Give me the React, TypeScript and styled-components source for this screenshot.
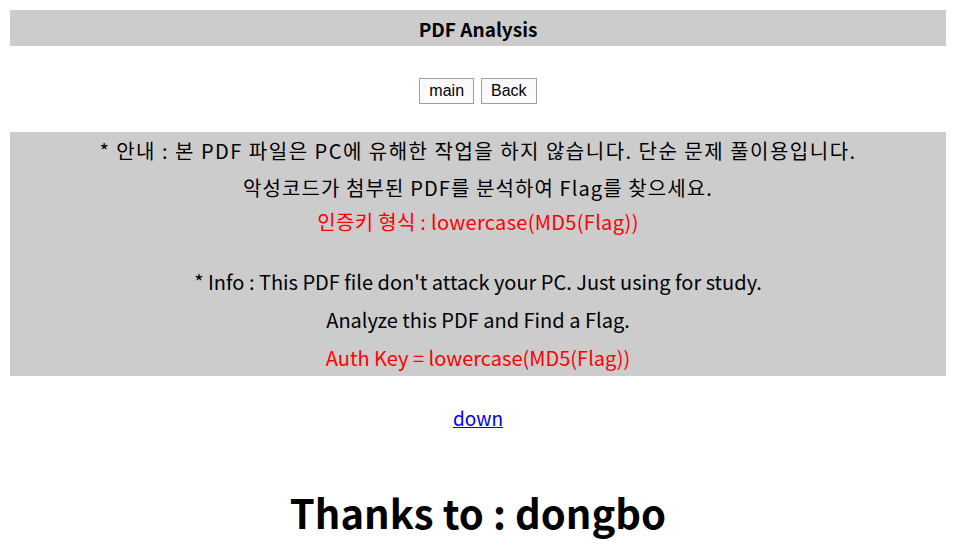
import React from "react";
import styled, { createGlobalStyle } from "styled-components";

const Global = createGlobalStyle`
  html, body { margin: 0; padding: 0; background: #fff; }
  body { padding: 10px 9px 10px 10px; font-family: "Noto Sans CJK KR", "Noto Sans", sans-serif; color: #000; }
`;

const Header = styled.div`
  background: #cccccc;
  height: 36px;
  display: flex;
  align-items: center;
  justify-content: center;
  font-size: 19px;
  font-weight: bold;
`;

const ButtonRow = styled.div`
  display: flex;
  justify-content: center;
  gap: 7px;
  margin-top: 32px;
  margin-bottom: 28px;
`;

const Btn = styled.button`
  font-family: "Liberation Sans", Arial, sans-serif;
  font-size: 16px;
  height: 26px;
  padding: 0 9px;
  background: #fafafa;
  border: 1px solid #a0a0a0;
  border-radius: 0;
  color: #000;
`;

const InfoBox = styled.div`
  background: #cccccc;
  height: 244px;
  display: flex;
  flex-direction: column;
  align-items: center;
  padding-top: 5px;
  box-sizing: border-box;
`;

const Line = styled.div<{ $red?: boolean; $gap?: number; $ls?: number }>`
  font-size: 20px;
  line-height: 28px;
  color: ${(p) => (p.$red ? "#ff0000" : "#000")};
  margin-top: ${(p) => p.$gap ?? 0}px;
  letter-spacing: ${(p) => p.$ls ?? 0}px;
  white-space: nowrap;
`;

const DownWrap = styled.div`
  display: flex;
  justify-content: center;
  margin-top: 28px;
`;

const DownLink = styled.a`
  font-size: 19px;
  color: #0000ee;
  text-decoration: underline;
`;

const Thanks = styled.h1`
  text-align: center;
  font-size: 40px;
  font-weight: bold;
  margin: 53px 0 0;
  line-height: 56px;
`;

export default function App() {
  return (
    <>
      <Global />
      <Header>PDF Analysis</Header>
      <ButtonRow>
        <Btn>main</Btn>
        <Btn>Back</Btn>
      </ButtonRow>
      <InfoBox>
        <Line $ls={1.5}>* 안내 : 본 PDF 파일은 PC에 유해한 작업을 하지 않습니다. 단순 문제 풀이용입니다.</Line>
        <Line $gap={9} $ls={1.1}>악성코드가 첨부된 PDF를 분석하여 Flag를 찾으세요.</Line>
        <Line $red $gap={6} $ls={0.3}>인증키 형식 : lowercase(MD5(Flag))</Line>
        <Line $gap={32}>* Info : This PDF file don't attack your PC. Just using for study.</Line>
        <Line $gap={10}>Analyze this PDF and Find a Flag.</Line>
        <Line $red $gap={10}>Auth Key = lowercase(MD5(Flag))</Line>
      </InfoBox>
      <DownWrap>
        <DownLink href="#">down</DownLink>
      </DownWrap>
      <Thanks>Thanks to : dongbo</Thanks>
    </>
  );
}
